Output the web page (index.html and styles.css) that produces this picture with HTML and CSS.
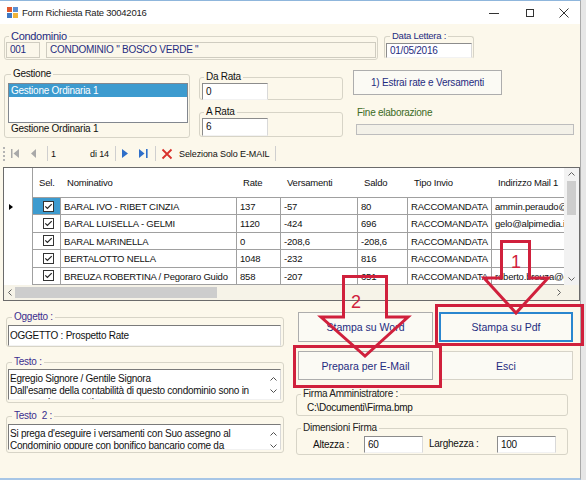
FILE: index.html
```html
<!DOCTYPE html>
<html lang="it">
<head>
    <meta charset="UTF-8">
    <title>Form Richiesta Rate 30042016</title>
    <link rel="stylesheet" href="styles.css">
</head>
<body>
<div class="screen">
    <div class="window">

        <div class="titlebar">
            <svg class="app-icon" width="11" height="11" viewBox="0 0 11 11">
                <rect x="0" y="0" width="5" height="5" fill="#e0572c"/>
                <rect x="6" y="0" width="5" height="5" fill="#5b8fd2"/>
                <rect x="0" y="6" width="5" height="5" fill="#3f79c4"/>
                <rect x="6" y="6" width="5" height="5" fill="#f0b43a"/>
            </svg>
            <span class="title">Form Richiesta Rate 30042016</span>
            <div class="win-controls">
                <span class="wc"><svg width="10" height="10"><path d="M0 5.5 H10" stroke="#333"/></svg></span>
                <span class="wc"><svg width="10" height="10"><rect x="1.5" y="1.5" width="7" height="7" fill="none" stroke="#333"/></svg></span>
                <span class="wc wc-close"><svg width="10" height="10"><path d="M0.5 0.5 L9.5 9.5 M9.5 0.5 L0.5 9.5" stroke="#333"/></svg></span>
            </div>
        </div>

        <div class="row-top">
            <fieldset class="grp grp-condominio">
                <legend>Condominio</legend>
                <div class="cond-fields">
                    <div class="field ro code">001</div>
                    <div class="field ro name">CONDOMINIO " BOSCO VERDE "</div>
                </div>
            </fieldset>
            <fieldset class="grp grp-data">
                <legend>Data Lettera :</legend>
                <div class="field date">01/05/2016</div>
            </fieldset>
        </div>

        <div class="row-mid">
            <fieldset class="grp grp-gestione">
                <legend>Gestione</legend>
                <div class="listbox">
                    <div class="list-item selected">Gestione Ordinaria 1</div>
                </div>
                <div class="gest-label">Gestione Ordinaria 1</div>
            </fieldset>

            <div class="rate-col">
                <fieldset class="grp grp-rate first">
                    <legend>Da Rata</legend>
                    <div class="field num">0</div>
                </fieldset>
                <fieldset class="grp grp-rate second">
                    <legend>A Rata</legend>
                    <div class="field num tall">6</div>
                </fieldset>
            </div>

            <div class="action-col">
                <button class="btn btn-estrai">1) Estrai rate e Versamenti</button>
                <div class="fine-label">Fine elaborazione</div>
                <div class="progress"></div>
            </div>
        </div>

        <div class="toolbar">
            <span class="grip"></span>
            <svg class="tb-first" width="8" height="9" viewBox="0 0 8 9"><rect x="0" y="0" width="1.5" height="9" fill="#a9a9a9"/><path d="M8 0 L2.5 4.5 L8 9Z" fill="#a9a9a9"/></svg>
            <svg class="tb-prev" width="5" height="9" viewBox="0 0 5 9"><path d="M5 0 L0 4.5 L5 9Z" fill="#a9a9a9"/></svg>
            <span class="tb-sep s1"></span>
            <span class="tb-pos">1</span>
            <span class="tb-count">di 14</span>
            <span class="tb-sep s2"></span>
            <svg class="tb-next" width="6" height="9" viewBox="0 0 6 9"><path d="M0 0 L6 4.5 L0 9Z" fill="#2f6fc9"/></svg>
            <svg class="tb-last" width="9" height="9" viewBox="0 0 9 9"><path d="M0 0 L5.5 4.5 L0 9Z" fill="#2f6fc9"/><rect x="7" y="0" width="1.6" height="9" fill="#2f6fc9"/></svg>
            <span class="tb-sep s3"></span>
            <svg class="tb-del" width="12" height="12" viewBox="0 0 12 12"><path d="M1.5 1.5 L10.5 10.5 M10.5 1.5 L1.5 10.5" stroke="#d8312b" stroke-width="1.8"/></svg>
            <span class="tb-text">Seleziona Solo E-MAIL</span>
            <span class="tb-sep s4"></span>
        </div>

        <div class="grid">
            <div class="grid-data">
                <div class="grid-table">
                    <div class="hc corner"></div>
                    <div class="hc">Sel.</div>
                    <div class="hc">Nominativo</div>
                    <div class="hc">Rate</div>
                    <div class="hc">Versamenti</div>
                    <div class="hc">Saldo</div>
                    <div class="hc">Tipo Invio</div>
                    <div class="hc">Indirizzo Mail 1</div>

                    <div class="rh"><span class="cur"></span></div>
                    <div class="c sel active"><svg width="11" height="11" viewBox="0 0 11 11"><rect x="0.5" y="0.5" width="10" height="10" fill="#fff" stroke="#333"/><path d="M2.3 5.4 L4.4 7.5 L8.7 3.1" fill="none" stroke="#222" stroke-width="1.2"/></svg></div>
                    <div class="c">BARAL IVO - RIBET CINZIA</div>
                    <div class="c">137</div>
                    <div class="c">-57</div>
                    <div class="c">80</div>
                    <div class="c">RACCOMANDATA</div>
                    <div class="c">ammin.peraudo@libero.it</div>

                    <div class="rh"></div>
                    <div class="c sel"><svg width="11" height="11" viewBox="0 0 11 11"><rect x="0.5" y="0.5" width="10" height="10" fill="#fff" stroke="#333"/><path d="M2.3 5.4 L4.4 7.5 L8.7 3.1" fill="none" stroke="#222" stroke-width="1.2"/></svg></div>
                    <div class="c">BARAL LUISELLA - GELMI</div>
                    <div class="c">1120</div>
                    <div class="c">-424</div>
                    <div class="c">696</div>
                    <div class="c">RACCOMANDATA</div>
                    <div class="c">gelo@alpimedia.it</div>

                    <div class="rh"></div>
                    <div class="c sel"><svg width="11" height="11" viewBox="0 0 11 11"><rect x="0.5" y="0.5" width="10" height="10" fill="#fff" stroke="#333"/><path d="M2.3 5.4 L4.4 7.5 L8.7 3.1" fill="none" stroke="#222" stroke-width="1.2"/></svg></div>
                    <div class="c">BARAL MARINELLA</div>
                    <div class="c">0</div>
                    <div class="c">-208,6</div>
                    <div class="c">-208,6</div>
                    <div class="c">RACCOMANDATA</div>
                    <div class="c"></div>

                    <div class="rh"></div>
                    <div class="c sel"><svg width="11" height="11" viewBox="0 0 11 11"><rect x="0.5" y="0.5" width="10" height="10" fill="#fff" stroke="#333"/><path d="M2.3 5.4 L4.4 7.5 L8.7 3.1" fill="none" stroke="#222" stroke-width="1.2"/></svg></div>
                    <div class="c">BERTALOTTO NELLA</div>
                    <div class="c">1048</div>
                    <div class="c">-232</div>
                    <div class="c">816</div>
                    <div class="c">RACCOMANDATA</div>
                    <div class="c"></div>

                    <div class="rh"></div>
                    <div class="c sel"><svg width="11" height="11" viewBox="0 0 11 11"><rect x="0.5" y="0.5" width="10" height="10" fill="#fff" stroke="#333"/><path d="M2.3 5.4 L4.4 7.5 L8.7 3.1" fill="none" stroke="#222" stroke-width="1.2"/></svg></div>
                    <div class="c">BREUZA ROBERTINA / Pegoraro Guido</div>
                    <div class="c">858</div>
                    <div class="c">-207</div>
                    <div class="c">651</div>
                    <div class="c">RACCOMANDATA</div>
                    <div class="c">roberto.breuza@gmail.com</div>
                </div>
            </div>
            <div class="vscroll">
                <span class="sb-arrow"><svg width="7" height="4"><path d="M0.5 3.5 L3.5 0.5 L6.5 3.5" fill="none" stroke="#606060"/></svg></span>
                <span class="vthumb"></span>
                <span class="sb-fill"></span>
                <span class="sb-arrow"><svg width="7" height="4"><path d="M0.5 0.5 L3.5 3.5 L6.5 0.5" fill="none" stroke="#606060"/></svg></span>
            </div>
            <div class="hscroll">
                <span class="sb-harrow"><svg width="4" height="7"><path d="M3.5 0.5 L0.5 3.5 L3.5 6.5" fill="none" stroke="#606060"/></svg></span>
                <span class="hthumb"></span>
                <span class="sb-fill"></span>
                <span class="sb-harrow right"><svg width="4" height="7"><path d="M0.5 0.5 L3.5 3.5 L0.5 6.5" fill="none" stroke="#606060"/></svg></span>
            </div>
            <div class="sb-corner"></div>
        </div>

        <div class="row-bottom">
            <div class="left-col">
                <fieldset class="grp grp-text grp-oggetto">
                    <legend>Oggetto :</legend>
                    <div class="tb">OGGETTO : Prospetto Rate</div>
                </fieldset>
                <fieldset class="grp grp-text grp-testo">
                    <legend>Testo :</legend>
                    <div class="ta ta-testo">
                        <div class="ta-text">Egregio Signore / Gentile Signora<br>Dall'esame della contabilità di questo condominio sono in<br>sospeso le seguenti somme:</div>
                        <div class="ta-scroll">
                            <svg width="7" height="4"><path d="M0.5 3.5 L3.5 0.5 L6.5 3.5" fill="none" stroke="#505050"/></svg>
                            <svg width="7" height="4"><path d="M0.5 0.5 L3.5 3.5 L6.5 0.5" fill="none" stroke="#505050"/></svg>
                        </div>
                    </div>
                </fieldset>
                <fieldset class="grp grp-text grp-testo2">
                    <legend>Testo &nbsp;2 :</legend>
                    <div class="ta ta-testo2">
                        <div class="ta-text">Si prega d'eseguire i versamenti con Suo assegno al<br>Condominio oppure con bonifico bancario come da</div>
                        <div class="ta-scroll">
                            <svg width="7" height="4"><path d="M0.5 3.5 L3.5 0.5 L6.5 3.5" fill="none" stroke="#505050"/></svg>
                            <svg width="7" height="4"><path d="M0.5 0.5 L3.5 3.5 L6.5 0.5" fill="none" stroke="#505050"/></svg>
                        </div>
                    </div>
                </fieldset>
            </div>

            <div class="right-col">
                <div class="btn-grid">
                    <button class="btn">Stampa su Word</button>
                    <button class="btn btn-pdf">Stampa su Pdf</button>
                    <button class="btn">Prepara per E-Mail</button>
                    <button class="btn btn-esci">Esci</button>
                </div>
                <fieldset class="grp grp-firma">
                    <legend>Firma Amministratore :</legend>
                    <div class="firma-path">C:\Documenti\Firma.bmp</div>
                </fieldset>
                <fieldset class="grp grp-dim">
                    <legend>Dimensioni Firma</legend>
                    <div class="dim-row">
                        <span class="dim-label alt">Altezza :</span>
                        <div class="field num dim">60</div>
                        <span class="dim-label larg">Larghezza :</span>
                        <div class="field num dim">100</div>
                    </div>
                </fieldset>
            </div>
        </div>

    </div>

    <!-- red annotations drawn over the form -->
    <svg class="annotations" width="586" height="480" viewBox="0 0 586 480">
        <g fill="none" stroke="#d0203c" stroke-width="3">
            <rect x="436.5" y="305.5" width="146" height="39"/>
            <rect x="294.5" y="346.5" width="146" height="40"/>
            <polygon points="501.5,241.5 529.5,241.5 529.5,278 548,278 516,313 484,278 501.5,278"/>
            <polygon points="343.5,276.5 386.5,276.5 386.5,317 408,317 365,356 321,317 343.5,317"/>
        </g>
        <text x="516" y="268" class="annot-num" text-anchor="middle">1</text>
        <text x="356" y="308" class="annot-num" text-anchor="middle">2</text>
    </svg>
</div>
</body>
</html>
```

FILE: styles.css
```css
* {
    box-sizing: border-box;
}
html, body {
    margin: 0;
    padding: 0;
}
body {
    font-family: "Liberation Sans", Arial, sans-serif;
    font-size: 10px;
    letter-spacing: -0.25px;
    color: #111;
    background: #e6e6e6;
}
.screen {
    position: relative;
    width: 586px;
    height: 480px;
    overflow: hidden;
}
.window {
    width: 581px;
    height: 480px;
    background: #fcf8eb;
    border-top: 1px solid #8fb6dc;
    border-right: 1px solid #a9a9a9;
    border-bottom: 2px solid #a7c6e6;
    overflow: hidden;
}

/* title bar */
.titlebar {
    height: 23px;
    background: #fff;
    display: flex;
    align-items: center;
}
.app-icon {
    margin-left: 7px;
}
.title {
    margin-left: 4px;
    font-size: 9.5px;
    color: #222;
}
.win-controls {
    margin-left: auto;
    display: flex;
}
.wc {
    width: 36px;
    height: 23px;
    display: flex;
    align-items: center;
    justify-content: center;
}
.wc-close {
    width: 32px;
}

/* group boxes */
.grp {
    margin: 0;
    padding: 0;
    min-width: 0;
    border: 1px solid #d7d4c7;
    border-radius: 3px;
}
.grp legend {
    padding: 0 2px;
    margin-left: 4px;
    line-height: 12px;
}
.field {
    height: 16px;
    line-height: 14px;
    padding: 0 3px;
    border: 1px solid #8c8c8c;
    border-right-color: #d9d9d9;
    border-bottom-color: #f2f2f2;
    background: #fff;
    white-space: nowrap;
    overflow: hidden;
}
.field.ro {
    background: #fbf7ea;
    border: 1px solid #cfccc0;
    color: #1f2c80;
}

/* top row */
.row-top {
    display: flex;
    align-items: flex-start;
    margin-top: 6px;
}
.grp-condominio {
    margin-left: 4px;
    width: 374px;
    height: 30px;
    padding: 0 1px 1px 1px;
}
.grp-condominio legend {
    margin-left: 3px;
    font-size: 11px;
    letter-spacing: -0.3px;
    color: #1f2c80;
}
.cond-fields {
    display: flex;
    gap: 6px;
}
.field.code {
    width: 34px;
}
.field.name {
    flex: 1;
}
.grp-data {
    margin-left: 6px;
    width: 90px;
    height: 29px;
    padding: 0 1px;
    border-bottom-color: transparent;
}
.grp-data legend {
    font-size: 9.5px;
    color: #1f2c80;
}
.field.date {
    margin-top: 1px;
    height: 15px;
    line-height: 13px;
    color: #1f2c80;
}

/* middle row */
.row-mid {
    display: flex;
    align-items: flex-start;
    margin-top: 8px;
    height: 70px;
}
.grp-gestione {
    margin-left: 4px;
    width: 186px;
    height: 70px;
    padding: 0 1px 0 3px;
}
.grp-gestione legend {
    margin-left: 3px;
}
.listbox {
    margin-top: 3px;
    width: 180px;
    height: 40px;
    background: #fff;
    border: 1px solid #82878f;
}
.list-item {
    height: 13px;
    line-height: 13px;
    padding-left: 2px;
}
.list-item.selected {
    background: #3d9bcf;
    color: #fff;
}
.gest-label {
    margin-left: 3px;
    line-height: 12px;
}
.rate-col {
    margin-left: 9px;
    width: 144px;
}
.grp-rate {
    height: 29px;
    padding: 0 0 0 2px;
}
.grp-rate legend {
    margin-left: 2px;
}
.grp-rate.first {
    margin-top: 3px;
}
.grp-rate.second {
    margin-top: 6px;
    height: 31px;
}
.field.num {
    width: 66px;
    height: 17px;
    line-height: 15px;
}
.field.num.tall {
    height: 18px;
    line-height: 16px;
}
.action-col {
    margin-left: 10px;
    width: 222px;
}
.btn {
    margin: 0;
    padding: 0;
    font-family: "Liberation Sans", Arial, sans-serif;
    font-size: 10.5px;
    color: #1f2c80;
    background: #fbfaf4;
    border: 1px solid #adadad;
    display: flex;
    align-items: center;
    justify-content: center;
}
.btn-estrai {
    margin-top: 2px;
    width: 149px;
    height: 25px;
    font-size: 10px;
    letter-spacing: -0.2px;
}
.fine-label {
    margin: 12px 0 0 4px;
    line-height: 12px;
    color: #3b6a24;
}
.progress {
    margin: 5px 0 0 3px;
    width: 218px;
    height: 11px;
    border: 1px solid #bdbdbd;
    background: #f3f1e8;
}

/* binding navigator */
.toolbar {
    display: flex;
    align-items: center;
    height: 21px;
    margin-top: 5px;
    font-size: 9px;
    letter-spacing: -0.1px;
}
.grip {
    margin-left: 3px;
    width: 2px;
    height: 14px;
    border-left: 2px dotted #b4b4b4;
}
.tb-first { margin-left: 6px; }
.tb-prev { margin-left: 12px; }
.tb-sep {
    width: 1px;
    height: 15px;
    background: #cfcfcf;
}
.tb-sep.s1 { margin-left: 11px; }
.tb-pos {
    margin-left: 3px;
    width: 38px;
}
.tb-count { margin-left: 1px; }
.tb-sep.s2 { margin-left: 6px; }
.tb-next { margin-left: 6px; }
.tb-last { margin-left: 11px; }
.tb-sep.s3 { margin-left: 7px; }
.tb-del { margin-left: 5px; }
.tb-text { margin-left: 6px; }
.tb-sep.s4 { margin-left: 6px; }

/* data grid */
.grid {
    margin: 3px 0 0 3px;
    width: 577px;
    height: 134px;
    border: 1px solid #6b6b6b;
    background: #fff;
    display: grid;
    grid-template-columns: 1fr 15px;
    grid-template-rows: 1fr 15px;
}
.grid-data {
    overflow: hidden;
}
.grid-table {
    display: grid;
    grid-template-columns: 29px 28px 176px 44px 77px 50px 84px 90px;
    grid-template-rows: 30px repeat(5, 17.4px);
    font-size: 9.5px;
    letter-spacing: -0.2px;
}
.hc {
    padding-left: 6px;
    line-height: 29px;
    border-bottom: 1px solid #a0a0a0;
    white-space: nowrap;
    overflow: hidden;
}
.hc.corner {
    border-bottom: none;
    border-right: 1px solid #a0a0a0;
}
.rh {
    border-right: 1px solid #a0a0a0;
    padding-left: 5px;
    display: flex;
    align-items: center;
}
.cur {
    width: 0;
    height: 0;
    border-left: 4px solid #000;
    border-top: 3.5px solid transparent;
    border-bottom: 3.5px solid transparent;
}
.c {
    padding-left: 3px;
    line-height: 18px;
    border-right: 1px solid #a0a0a0;
    border-bottom: 1px solid #a0a0a0;
    white-space: nowrap;
    overflow: hidden;
}
.c.sel {
    padding-left: 10px;
    display: flex;
    align-items: center;
}
.c.sel.active {
    background: #3d9bcf;
}
.vscroll {
    background: #f2f2f2;
    display: flex;
    flex-direction: column;
    align-items: center;
}
.sb-arrow {
    height: 12px;
    display: flex;
    align-items: center;
}
.vthumb {
    margin-top: 1px;
    width: 9px;
    height: 34px;
    background: #cdcdcd;
}
.sb-fill {
    flex: 1;
}
.hscroll {
    background: #f6f3e8;
    display: flex;
    align-items: center;
}
.sb-harrow {
    width: 11px;
    display: flex;
    justify-content: center;
}
.sb-harrow.right {
    width: 10px;
}
.hthumb {
    width: 202px;
    height: 11px;
    background: #cdcdcd;
}
.sb-corner {
    background: #f6f3e8;
}

/* bottom area */
.row-bottom {
    display: flex;
    align-items: flex-start;
}
.left-col {
    margin-left: 6px;
    width: 278px;
}
.grp-text {
    padding: 0 2px 0 1px;
}
.grp-text legend {
    color: #3b2d8e;
}
.grp-oggetto {
    margin-top: 10px;
}
.grp-testo {
    margin-top: 9px;
    padding-bottom: 2px;
}
.grp-testo2 {
    margin-top: 7px;
    padding-bottom: 2px;
}
.tb {
    margin-top: 2px;
    width: 273px;
    height: 21px;
    line-height: 19px;
    padding-left: 1px;
    background: #fff;
    border: 1px solid #7a7a7a;
    border-right-color: #d9d9d9;
    border-bottom-color: #f2f2f2;
}
.ta {
    display: flex;
    width: 273px;
    background: #fff;
    border: 1px solid #7a7a7a;
    border-right-color: #d9d9d9;
    border-bottom-color: #f2f2f2;
}
.ta-testo {
    margin-top: 1px;
    height: 31px;
}
.ta-testo2 {
    margin-top: 2px;
    height: 26px;
}
.ta-text {
    flex: 1;
    padding: 3px 0 0 1px;
    line-height: 12px;
    white-space: nowrap;
    overflow: hidden;
}
.ta-scroll {
    width: 14px;
    padding-top: 7px;
    display: flex;
    flex-direction: column;
    align-items: center;
    gap: 8px;
}
.right-col {
    margin-left: 12px;
    width: 272px;
}
.btn-grid {
    margin: 11px 0 0 2px;
    display: grid;
    grid-template-columns: 135px 134px;
    grid-template-rows: 30px 29px;
    column-gap: 6px;
    row-gap: 9px;
}
.btn-pdf {
    border: 2px solid #2a86cf;
}
.btn-esci {
    border-color: #d6d3c8;
}
.grp-firma {
    margin-top: 8px;
    padding: 0 0 1px 10px;
}
.grp-firma legend,
.grp-dim legend {
    margin-left: 4px;
    color: #222;
}
.grp-firma legend {
    margin-left: -6px;
}
.firma-path {
    margin-top: 2px;
    line-height: 12px;
}
.grp-dim {
    margin-top: 6px;
    padding: 0 0 1px 0;
}
.dim-row {
    margin-top: 2px;
    display: flex;
    align-items: center;
}
.dim-label.alt {
    margin-left: 16px;
    width: 51px;
}
.dim-label.larg {
    margin-left: 6px;
    width: 68px;
    margin-top: -2px;
}
.field.num.dim {
    width: 59px;
}

/* annotations */
.annotations {
    position: absolute;
    left: 0;
    top: 0;
    pointer-events: none;
}
.annot-num {
    font-family: "Liberation Sans", Arial, sans-serif;
    font-size: 18px;
    fill: #d0203c;
}
```
